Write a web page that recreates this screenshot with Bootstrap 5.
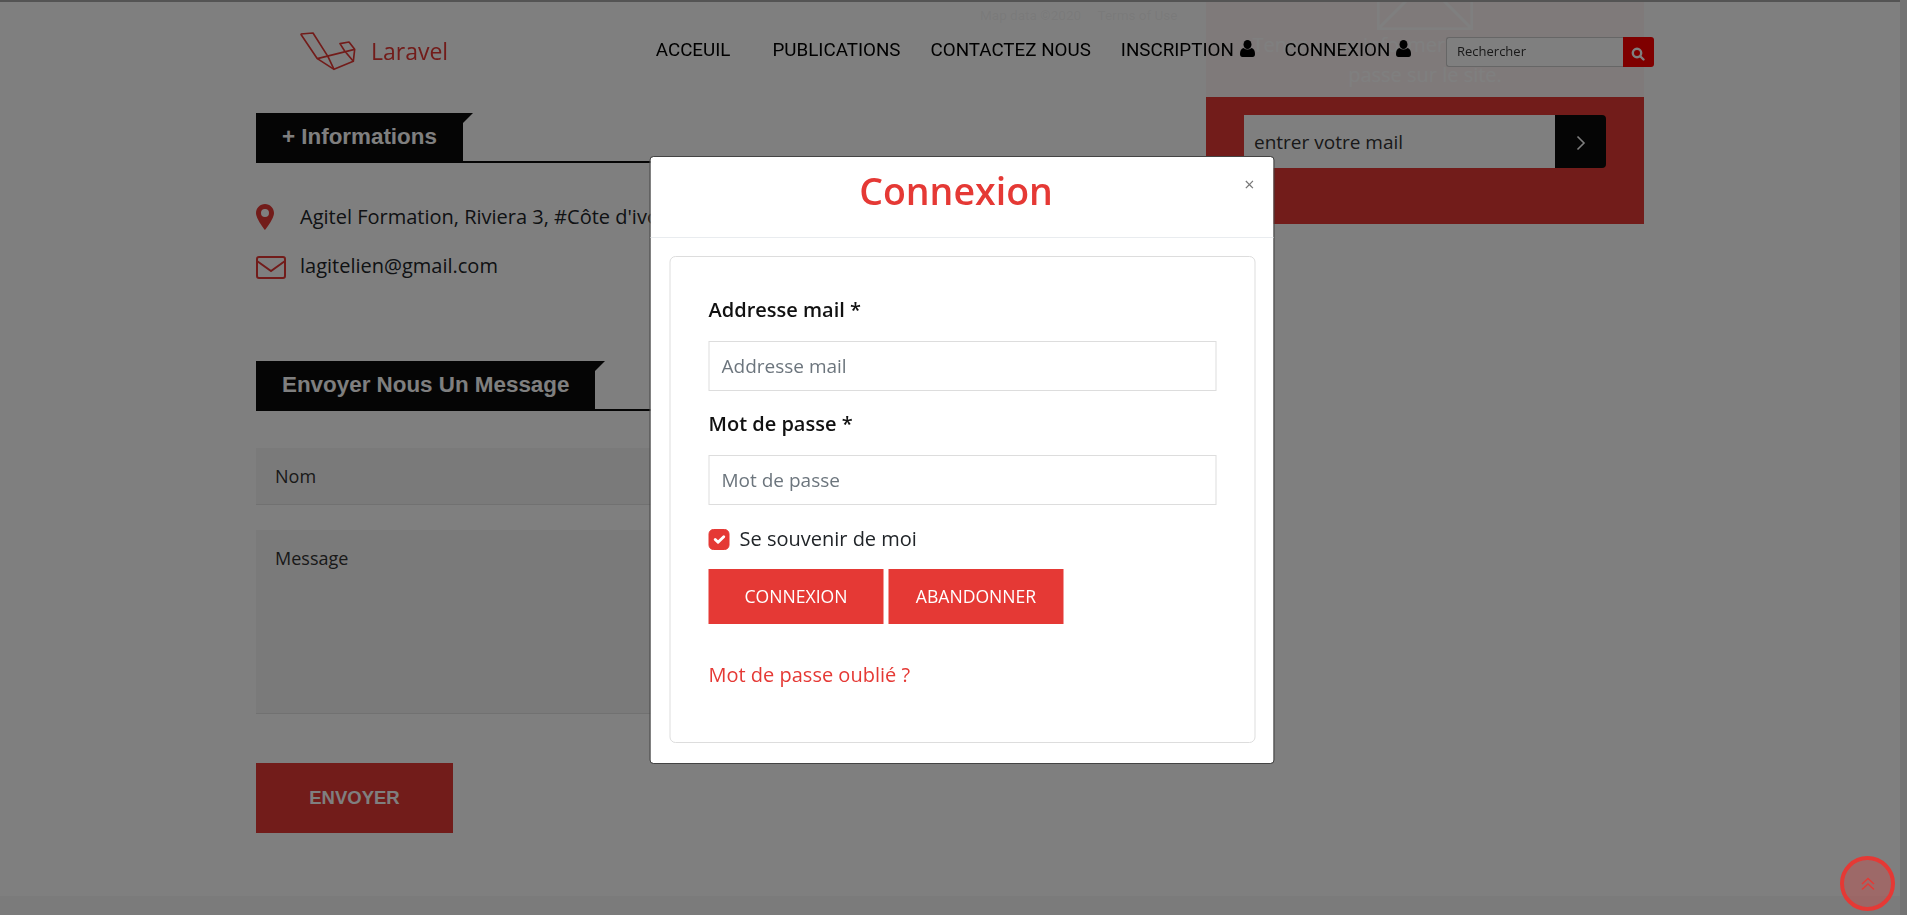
<!DOCTYPE html>
<html lang="fr">
<head>
  <meta charset="UTF-8">
  <title>Connexion</title>
  <link href="https://cdn.jsdelivr.net/npm/bootstrap@5.3.2/dist/css/bootstrap.min.css" rel="stylesheet">
  <style>
    html, body { height: 100%; overflow: hidden; }
    body { font-family: "Open Sans", sans-serif; font-size: 20px; color: #212529; background: #fff; }

    .page-wrap { height: 100vh; }
    .page-main { flex: 1 1 auto; min-width: 0; }
    .scroll-strip { width: 7px; background: #e6e6e6; }

    .site-head { position: fixed; top: 0; left: 0; right: 7px; height: 97px; padding: 0 246px 0 300px; border-top: 2px solid #a9a9a9; background: rgba(255,255,255,.95); z-index: 10; }
    .brand-name { color: #e53935; font-size: 23px; margin-left: 15px; }
    .brand-link { margin-top: 4px; }
    .head-link { font-family: Roboto, sans-serif; font-size: 18.800px; color: #000; text-decoration: none; white-space: nowrap; }
    .head-link svg { vertical-align: -1px; margin-left: 1px; }
    .head-nav { gap: 30px; margin-top: 2px; }
    .head-first { margin-right: 12px; }
    .search-box { width: 208px; height: 30px; margin: 5px 0 0 35px; }
    .search-box input { flex: 1 1 auto; min-width: 0; border: 1px solid #ccc; border-right: 0; border-radius: 3px 0 0 3px; font-family: "Open Sans", sans-serif; font-size: 13px; padding: 0 10px; outline: 0; }
    .search-box input::placeholder { color: #333; }
    .search-btn { width: 33px; background: #f00; border: 0; border-radius: 0 3px 3px 0; padding: 0; }

    .content-wrap { width: 1388px; margin: 0 auto; }
    .col-left { width: 909px; padding-top: 113px; }
    .col-right { width: 438px; margin-left: 41px; }

    .sec-title { border-bottom: 2px solid #0a0a0a; height: 50px; }
    .sec-tab { position: relative; display: inline-block; height: 50px; padding: 0 26px; margin: 0; background: #0a0a0a; color: #fff; font-family: "Liberation Sans", sans-serif; font-weight: 700; font-size: 22.4px; line-height: 48px; }
    .sec-tab::after { content: ""; position: absolute; top: 0; left: 100%; border-top: 10px solid #0a0a0a; border-right: 10px solid transparent; }
    .info-line { height: 49px; white-space: nowrap; }
    .info-icon { width: 44px; flex: none; }
    .mail-icon { margin-top: 3px; }
    .info-list { margin-top: 29px; margin-bottom: 71px; }

    .msg-field { display: block; width: 100%; background: #f5f5f5; border: 0; border-bottom: 1px solid #e2e2e2; padding: 0 19px; font-size: 18px; color: #212529; outline: 0; border-radius: 0; }
    .msg-field::placeholder { color: #333; }
    input.msg-field { height: 57px; margin-top: 37px; }
    textarea.msg-field { height: 184px; margin-top: 25px; padding-top: 15px; resize: none; }
    .send-btn { width: 197px; height: 70px; margin-top: 49px; background: #e53935; border: 0; color: #fff; font-family: "Liberation Sans", sans-serif; font-weight: 700; font-size: 18.5px; }

    .news-box { height: 224px; background: #e53935; color: #fff; padding: 0 38px; text-align: center; }
    .news-logo { display: block; margin: 0 auto; }
    .news-text { font-size: 20px; line-height: 30px; margin: 0; height: 85px; white-space: nowrap; }
    .news-form { height: 53px; }
    .news-form input { flex: 1 1 auto; min-width: 0; border: 0; padding: 2px 10px 0; font-size: 19px; outline: 0; }
    .news-form input::placeholder { color: #333; }
    .news-btn { width: 51px; background: #0a0a0a; border: 0; border-radius: 0 4px 4px 0; padding: 0; }
    .copy-line { position: absolute; top: 5px; left: 980px; font-family: Roboto, sans-serif; font-size: 13.5px; color: #333; white-space: pre; }

    .foot-strip { position: fixed; left: 0; right: 7px; bottom: 0; height: 19px; background: #f7f7f7; }

    .login-dialog { max-width: 625px; margin: 156px auto 0; transform: translateX(8.500px); }
    .login-dialog .modal-content { border-radius: 4px; border: 1px solid #444; height: 608px; }
    .login-head { height: 81px; border-bottom: 1px solid #e9ecef; position: relative; padding-bottom: 12px; }
    .login-title { color: #e53935; font-weight: 600; font-size: 37.500px; line-height: 1; margin: 0 12px 0 0; }
    .login-close { position: absolute; top: 18px; right: 19px; border: 0; background: none; padding: 0; color: #777; font-size: 18px; line-height: 1; }
    .login-card { margin: 18px 18px 0 19px; height: 487px; padding: 38px 38px 0; border: 1px solid #ddd; border-radius: 6px; }
    .login-label { font-weight: 600; font-size: 20px; color: #111; margin: 0 0 16px; line-height: 30px; display: block; }
    .login-input { height: 50px; border: 1px solid #ddd; border-radius: 0; font-size: 19px; padding: 0 12px; margin-bottom: 18px; }
    .login-input::placeholder { color: #6c757d; }
    .login-check { margin: 22px 0 18px; padding: 0; height: 22px; }
    .login-check .form-check-input { width: 21px; height: 21px; margin: 0 10px 0 0; background-color: #e53935; border-color: #e53935; float: none; }
    .login-check .form-check-label { font-size: 20px; }
    .login-actions { gap: 5px; }
    .login-btn { width: 175px; height: 55px; background: #e53935; color: #fff; border: 0; border-radius: 0; font-size: 17.600px; padding: 0; text-transform: uppercase; }
    .login-forgot { display: inline-block; margin-top: 36px; color: #e53935; text-decoration: none; font-size: 20px; }

    .back-top { position: fixed; right: 12px; bottom: 4px; width: 55px; height: 55px; border: 4px solid #e53935; border-radius: 50%; background: rgba(229,57,53,.3); z-index: 1060; }
  </style>
</head>
<body>
  <div class="page-wrap d-flex">
    <div class="page-main">
      <header class="site-head d-flex align-items-center">
        <a class="brand-link d-flex align-items-center text-decoration-none" href="#">
          <svg width="56" height="40" viewBox="58 50 168 120" fill="none" stroke="#e53935" stroke-width="5" stroke-linejoin="round">
            <path d="M60 56 L97 53 L142 124 M60 56 L110 130 L160 162 L218 138 L222 102 L205 80 L178 85 L192 107"/>
            <path d="M110 130 L222 102 M142 124 L160 162 M192 107 L218 138"/>
          </svg>
          <span class="brand-name">Laravel</span>
        </a>
        <nav class="head-nav d-flex align-items-center ms-auto">
          <a class="head-link head-first" href="#">ACCEUIL</a>
          <a class="head-link" href="#">PUBLICATIONS</a>
          <a class="head-link" href="#">CONTACTEZ NOUS</a>
          <a class="head-link" href="#">INSCRIPTION
            <svg width="15" height="17" viewBox="0 0 15 17" fill="#000"><ellipse cx="7.5" cy="4.5" rx="4" ry="4.5"/><path d="M3.5 8 Q7.5 11 11.500 8 Q15 9 15 14 Q15 17 12.500 17 L2.500 17 Q0 17 0 14 Q0 9 3.500 8 Z"/></svg>
          </a>
          <a class="head-link" href="#">CONNEXION
            <svg width="15" height="17" viewBox="0 0 15 17" fill="#000"><ellipse cx="7.5" cy="4.5" rx="4" ry="4.5"/><path d="M3.5 8 Q7.5 11 11.500 8 Q15 9 15 14 Q15 17 12.500 17 L2.500 17 Q0 17 0 14 Q0 9 3.500 8 Z"/></svg>
          </a>
        </nav>
        <form class="search-box d-flex">
          <input type="text" placeholder="Rechercher">
          <button class="search-btn" type="button">
            <svg width="14" height="14" viewBox="0 0 14 14" fill="none" stroke="#fff" stroke-width="2.400"><circle cx="6" cy="6" r="4.200"/><path d="M9.500 9.500 L12.500 12.500" stroke-linecap="round"/></svg>
          </button>
        </form>
      </header>

      <div class="copy-line">Map data ©2020     Terms of Use</div>

      <div class="content-wrap d-flex align-items-start">
        <div class="col-left">
          <div class="sec-title"><h4 class="sec-tab">+ Informations</h4></div>
          <div class="info-list">
            <div class="info-line d-flex align-items-center">
              <span class="info-icon">
                <svg class="d-block" width="18" height="26" viewBox="0 0 18 26"><path fill="#e53935" fill-rule="evenodd" d="M9 0 C4 0 0 4 0 9 C0 15 9 26 9 26 C9 26 18 15 18 9 C18 4 14 0 9 0 Z M9 5 A4 4 0 1 1 9 13 A4 4 0 1 1 9 5 Z"/></svg>
              </span>
              <span>Agitel Formation, Riviera 3, #Côte d'ivoire</span>
            </div>
            <div class="info-line d-flex align-items-center">
              <span class="info-icon">
                <svg class="d-block mail-icon" width="30" height="23" viewBox="0 0 30 23" fill="none" stroke="#e53935" stroke-width="2"><rect x="1" y="1" width="28" height="21" rx="2"/><path d="M1 5 L15 15 L29 5"/></svg>
              </span>
              <span>lagitelien@gmail.com</span>
            </div>
          </div>
          <div class="sec-title"><h4 class="sec-tab">Envoyer Nous Un Message</h4></div>
          <form>
            <input class="msg-field" type="text" placeholder="Nom">
            <textarea class="msg-field" placeholder="Message"></textarea>
            <button class="send-btn" type="button">ENVOYER</button>
          </form>
        </div>
        <div class="col-right">
          <div class="news-box">
            <svg class="news-logo" width="96" height="30" viewBox="0 0 96 30" fill="none" stroke="#fff" stroke-width="3"><path d="M1 0 V29 H95 V0 M1 29 L30 0 M95 29 L66 0"/></svg>
            <p class="news-text">Tenez-vous informer des nouveautés<br>passe sur le site.</p>
            <form class="news-form d-flex">
              <input type="text" placeholder="entrer votre mail">
              <button class="news-btn" type="button">
                <svg width="10" height="16" viewBox="0 0 10 16" fill="none" stroke="#fff" stroke-width="1.600"><path d="M1.500 1.500 L8 8 L1.500 14.500"/></svg>
              </button>
            </form>
          </div>
        </div>
      </div>
      <div class="foot-strip"></div>
    </div>
    <div class="scroll-strip"></div>
  </div>

  <div class="modal-backdrop show"></div>
  <div class="modal d-block" tabindex="-1">
    <div class="modal-dialog login-dialog">
      <div class="modal-content">
        <div class="login-head d-flex align-items-center justify-content-center">
          <h2 class="login-title">Connexion</h2>
          <button class="login-close" type="button" aria-label="Fermer">×</button>
        </div>
        <div class="login-card">
          <form>
            <label class="login-label" for="loginMail">Addresse mail *</label>
            <input class="form-control login-input" id="loginMail" type="email" placeholder="Addresse mail">
            <label class="login-label" for="loginPass">Mot de passe *</label>
            <input class="form-control login-input" id="loginPass" type="password" placeholder="Mot de passe">
            <div class="form-check login-check d-flex align-items-center">
              <input class="form-check-input" id="loginKeep" type="checkbox" checked>
              <label class="form-check-label" for="loginKeep">Se souvenir de moi</label>
            </div>
            <div class="login-actions d-flex">
              <button class="btn login-btn" type="button">Connexion</button>
              <button class="btn login-btn" type="button">Abandonner</button>
            </div>
            <a class="login-forgot" href="#">Mot de passe oublié ?</a>
          </form>
        </div>
      </div>
    </div>
  </div>

  <a class="back-top d-flex align-items-center justify-content-center" href="#" aria-label="Haut de page">
    <svg width="14" height="14" viewBox="0 0 14 14" fill="none" stroke="#e53935" stroke-width="1.500"><path d="M1 7 L7 1.500 L13 7 M1 12.500 L7 7 L13 12.500"/></svg>
  </a>

  <script src="https://cdn.jsdelivr.net/npm/bootstrap@5.3.2/dist/js/bootstrap.bundle.min.js"></script>
</body>
</html>
